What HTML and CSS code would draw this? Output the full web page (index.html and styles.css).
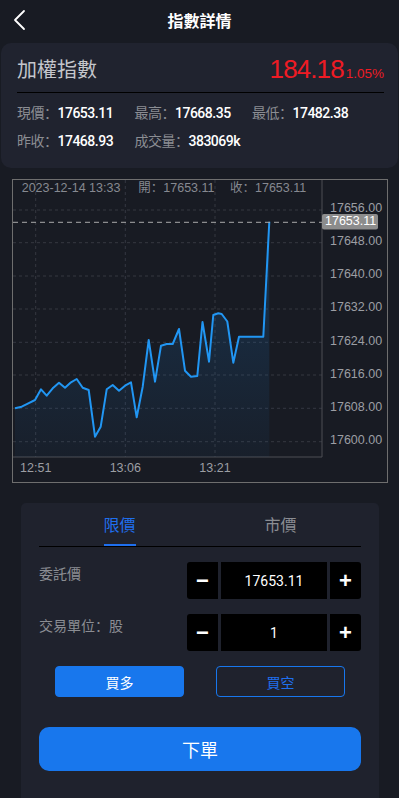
FILE: index.html
```html
<!DOCTYPE html>
<html lang="zh-CN">
<head>
<meta charset="utf-8">
<title>指數詳情</title>
<link rel="stylesheet" href="styles.css">
</head>
<body>
<header class="topbar">
  <svg class="back" width="14" height="22" viewBox="0 0 14 22"><path d="M11 2 L2 11 L11 20" fill="none" stroke="#fff" stroke-width="1.8" stroke-linecap="round" stroke-linejoin="round"/></svg>
  <h1 class="title">指數詳情</h1>
  <span></span>
</header>

<section class="info">
  <div class="info-head">
    <span class="name">加權指數</span>
    <span class="change"><span class="chg-val">184.18</span><span class="chg-pct">1.05%</span></span>
  </div>
  <div class="stats">
    <div class="stat"><span class="lbl">現價：</span><span class="val">17653.11</span></div>
    <div class="stat"><span class="lbl">最高：</span><span class="val">17668.35</span></div>
    <div class="stat"><span class="lbl">最低：</span><span class="val">17482.38</span></div>
    <div class="stat"><span class="lbl">昨收：</span><span class="val">17468.93</span></div>
    <div class="stat"><span class="lbl">成交量：</span><span class="val">383069k</span></div>
  </div>
</section>

<div class="chart">
  <svg class="chart-svg" width="374" height="302" viewBox="13 180 374 302">
    <defs>
      <linearGradient id="area" x1="0" y1="0" x2="0" y2="1">
        <stop offset="0" stop-color="#1e88e5" stop-opacity="0.22"/>
        <stop offset="1" stop-color="#1e88e5" stop-opacity="0.04"/>
      </linearGradient>
    </defs>
    <g class="grid">
      <line x1="13" y1="210" x2="322" y2="210"/>
      <line x1="13" y1="242.7" x2="322" y2="242.7"/>
      <line x1="13" y1="276" x2="322" y2="276"/>
      <line x1="13" y1="309" x2="322" y2="309"/>
      <line x1="13" y1="342.3" x2="322" y2="342.3"/>
      <line x1="13" y1="375" x2="322" y2="375"/>
      <line x1="13" y1="408.3" x2="322" y2="408.3"/>
      <line x1="13" y1="441.7" x2="322" y2="441.7"/>
      <line x1="35.7" y1="180" x2="35.7" y2="457"/>
      <line x1="125.3" y1="180" x2="125.3" y2="457"/>
      <line x1="215" y1="180" x2="215" y2="457"/>
    </g>
    <line class="axis" x1="322" y1="180" x2="322" y2="457"/>
    <line class="axis" x1="13" y1="457" x2="322" y2="457"/>
    <polygon fill="url(#area)" points="15,408.3 21.7,406.7 28.3,403.3 35,400 41,389.3 46.7,395.7 53.3,387.7 59,382.7 65,387.7 71,382.3 76.7,379 82.7,387.7 88.7,390 95,436.7 100.7,426.7 106.7,389.3 112.7,385 119,390.7 125,385.7 131,382.3 136.7,417.3 142.7,386.7 148.7,340 155,381.7 161,345.7 166.7,344 172.7,344 179,329 185,370.7 191,376.7 197.3,376 202.5,322 209,361.7 213.3,315 218.3,313.3 221.7,314 227.3,321.5 233.3,362.7 239,336.7 263.3,336.7 269.3,221.7 269.3,457 15,457"/>
    <polyline class="line" points="15,408.3 21.7,406.7 28.3,403.3 35,400 41,389.3 46.7,395.7 53.3,387.7 59,382.7 65,387.7 71,382.3 76.7,379 82.7,387.7 88.7,390 95,436.7 100.7,426.7 106.7,389.3 112.7,385 119,390.7 125,385.7 131,382.3 136.7,417.3 142.7,386.7 148.7,340 155,381.7 161,345.7 166.7,344 172.7,344 179,329 185,370.7 191,376.7 197.3,376 202.5,322 209,361.7 213.3,315 218.3,313.3 221.7,314 227.3,321.5 233.3,362.7 239,336.7 263.3,336.7 269.3,221.7"/>
    <line class="cur" x1="13" y1="222.3" x2="322" y2="222.3"/>
    <g class="ylab">
      <text x="330" y="209">17656.00</text>
      <text x="330" y="242">17648.00</text>
      <text x="330" y="275">17640.00</text>
      <text x="330" y="308">17632.00</text>
      <text x="330" y="341.5">17624.00</text>
      <text x="330" y="374.5">17616.00</text>
      <text x="330" y="407.5">17608.00</text>
      <text x="330" y="441">17600.00</text>
    </g>
    <rect x="322" y="214" width="56" height="15.5" rx="2" fill="#8c8c8c"/>
    <text class="curlab" x="325" y="222">17653.11</text>
    <g class="xlab">
      <text x="35.7" y="468.5">12:51</text>
      <text x="125.3" y="468.5">13:06</text>
      <text x="215" y="468.5">13:21</text>
    </g>
    <g class="head">
      <text x="21.7" y="189">2023-12-14 13:33</text>
      <text x="138.3" y="189">開：17653.11</text>
      <text x="230" y="189">收：17653.11</text>
    </g>
  </svg>
</div>

<section class="trade">
  <div class="tabs">
    <div class="tab active">限價</div>
    <div class="tab">市價</div>
  </div>
  <div class="row">
    <span class="row-lbl">委託價</span>
    <div class="stepper">
      <span class="step-btn">−</span>
      <span class="step-val">17653.11</span>
      <span class="step-btn">+</span>
    </div>
  </div>
  <div class="row">
    <span class="row-lbl">交易單位：股</span>
    <div class="stepper">
      <span class="step-btn">−</span>
      <span class="step-val">1</span>
      <span class="step-btn">+</span>
    </div>
  </div>
  <div class="sides">
    <div class="side"><button class="btn-side filled">買多</button></div>
    <div class="side"><button class="btn-side outline">買空</button></div>
  </div>
  <button class="submit">下單</button>
</section>
</body>
</html>
```

FILE: styles.css
```css
* { box-sizing: border-box; }
html, body {
  margin: 0;
  padding: 0;
  background: #181b23;
  height: 798px;
  overflow: hidden;
}
body {
  font-family: "Liberation Sans", "Noto Sans CJK SC", "Noto Sans", sans-serif;
  color: #fff;
}

.topbar {
  height: 43px;
  display: grid;
  grid-template-columns: 40px 1fr 40px;
  align-items: start;
}
.back {
  margin: 9px 0 0 13px;
}
.title {
  margin: 0;
  text-align: center;
  font-size: 16px;
  line-height: 40px;
  font-weight: 700;
  font-family: "Noto Sans CJK SC", sans-serif;
}

.info {
  margin: 0 1px;
  height: 125px;
  background: #20232f;
  border-radius: 10px;
  padding: 0 14px 0 16px;
}
.info-head {
  height: 50px;
  border-bottom: 1px solid #000;
  display: flex;
  justify-content: space-between;
  align-items: center;
}
.name {
  font-family: "Noto Sans CJK SC", sans-serif;
  font-size: 20px;
  color: #c4c6cc;
  padding-top: 1px;
}
.change {
  color: #ee1b24;
  white-space: nowrap;
  padding-top: 3px;
}
.chg-val {
  font-size: 26px;
  letter-spacing: -0.9px;
}
.chg-pct {
  font-size: 13.5px;
  margin-left: 2px;
}
.stats {
  padding-top: 6px;
  display: grid;
  grid-template-columns: 117.5px 117.5px auto;
  font-size: 14px;
  line-height: 27px;
}
.stat { white-space: nowrap; }
.lbl {
  color: #8b8d93;
  font-family: "Noto Sans CJK SC", sans-serif;
  letter-spacing: -0.5px;
}
.val {
  color: #fff;
  font-family: "Roboto", "Liberation Sans", sans-serif;
  font-size: 14px;
  font-weight: 500;
  letter-spacing: -0.5px;
}

.chart {
  margin: 11px 11px 0 12px;
  width: 376px;
  height: 304px;
  border: 1px solid #6e6e6e;
}
.chart-svg { display: block; }
.grid line {
  stroke: #353841;
  stroke-width: 1;
  stroke-dasharray: 3 3;
}
.axis { stroke: #4d4f55; stroke-width: 1; }
.line {
  fill: none;
  stroke: #2196f3;
  stroke-width: 2;
  stroke-linejoin: round;
}
.cur {
  stroke: #a9a9a9;
  stroke-width: 1;
  stroke-dasharray: 5 4;
}
.ylab text {
  fill: #9c9ea3;
  font-size: 12.5px;
  dominant-baseline: middle;
}
.curlab {
  fill: #fff;
  font-size: 12.5px;
  dominant-baseline: middle;
}
.xlab text {
  fill: #9c9ea3;
  font-size: 12.5px;
  text-anchor: middle;
  dominant-baseline: middle;
}
.head text {
  fill: #868991;
  font-family: "Liberation Sans", "Noto Sans CJK SC", sans-serif;
  font-size: 12.5px;
  dominant-baseline: middle;
}

.trade {
  margin: 20px 20px 0 21px;
  height: 295px;
  background: #1f222d;
  border-radius: 5px 5px 0 0;
  padding: 0 18px;
  font-family: "Noto Sans CJK SC", sans-serif;
}
.tabs {
  display: grid;
  grid-template-columns: 1fr 1fr;
  border-bottom: 1px solid #000;
  height: 44px;
}
.tab {
  position: relative;
  text-align: center;
  font-size: 16px;
  line-height: 43px;
  color: #8b8d93;
}
.tab.active { color: #1f6fee; }
.tab.active::after {
  content: "";
  position: absolute;
  left: 50%;
  bottom: 0;
  width: 32px;
  height: 2.5px;
  margin-left: -16px;
  background: #1f6fee;
}
.row {
  margin-top: 15px;
  display: flex;
  justify-content: space-between;
  align-items: flex-start;
}
.row-lbl {
  font-size: 14px;
  line-height: 22px;
  color: #8b8d93;
}
.stepper {
  width: 174px;
  height: 37px;
  display: grid;
  grid-template-columns: 31px 1fr 31px;
  gap: 3px;
}
.step-btn, .step-val {
  background: #000;
  display: flex;
  align-items: center;
  justify-content: center;
  color: #fff;
}
.step-btn {
  font-family: "Liberation Sans", sans-serif;
  font-size: 22px;
  font-weight: 700;
}
.step-btn:first-child { border-radius: 3px 0 0 3px; }
.step-btn:last-child { border-radius: 0 3px 3px 0; }
.step-val {
  font-family: "Roboto", "Liberation Sans", sans-serif;
  font-size: 14px;
}
.sides {
  margin-top: 15px;
  display: grid;
  grid-template-columns: 1fr 1fr;
}
.side {
  display: flex;
  justify-content: center;
}
.btn-side {
  width: 129px;
  height: 31px;
  border-radius: 4px;
  font-family: "Noto Sans CJK SC", sans-serif;
  font-size: 14px;
  padding: 0;
}
.filled {
  background: #1877ed;
  border: 1px solid #1877ed;
  color: #fff;
}
.outline {
  background: transparent;
  border: 1px solid #1877ed;
  color: #1f6fee;
}
.submit {
  display: block;
  margin-top: 30px;
  width: 100%;
  height: 44px;
  border: none;
  border-radius: 10px;
  background: #1877ed;
  color: #fff;
  font-family: "Noto Sans CJK SC", sans-serif;
  font-size: 18px;
}
```
